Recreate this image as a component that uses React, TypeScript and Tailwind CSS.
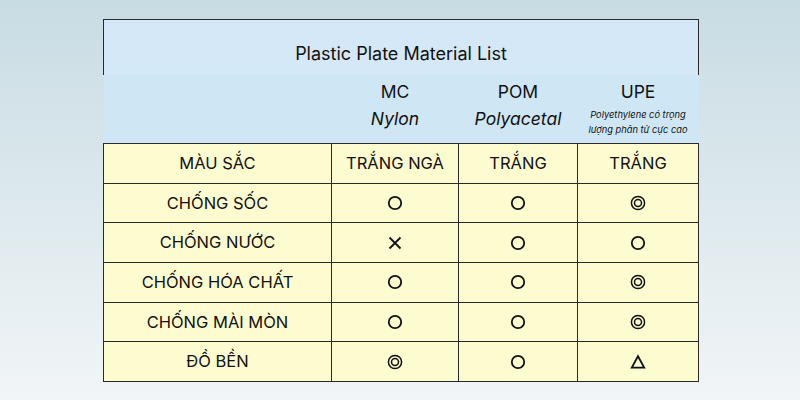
import type { FunctionComponent, JSX } from "react";

type Mark = "o" | "oo" | "x" | "tri";

interface Row {
  label: string;
  values: (Mark | string)[];
}

const rows: Row[] = [
  { label: "MÀU SẮC", values: ["TRẮNG NGÀ", "TRẮNG", "TRẮNG"] },
  { label: "CHỐNG SỐC", values: ["o", "o", "oo"] },
  { label: "CHỐNG NƯỚC", values: ["x", "o", "o"] },
  { label: "CHỐNG HÓA CHẤT", values: ["o", "o", "oo"] },
  { label: "CHỐNG MÀI MÒN", values: ["o", "o", "oo"] },
  { label: "ĐỒ BỀN", values: ["oo", "o", "tri"] },
];

const Symbol: FunctionComponent<{ mark: Mark }> = ({ mark }): JSX.Element => {
  if (mark === "o") {
    return (
      <svg width="16" height="16" viewBox="0 0 16 16" className="mx-auto">
        <circle cx="8" cy="8" r="6.2" fill="none" stroke="#111" strokeWidth="1.8" />
      </svg>
    );
  }
  if (mark === "oo") {
    return (
      <svg width="16" height="16" viewBox="0 0 16 16" className="mx-auto">
        <circle cx="8" cy="8" r="6.6" fill="none" stroke="#111" strokeWidth="1.5" />
        <circle cx="8" cy="8" r="3.5" fill="none" stroke="#111" strokeWidth="1.5" />
      </svg>
    );
  }
  if (mark === "x") {
    return (
      <svg width="16" height="16" viewBox="0 0 16 16" className="mx-auto">
        <path d="M2.5 2.5 L13.5 13.5 M13.5 2.5 L2.5 13.5" stroke="#111" strokeWidth="1.8" />
      </svg>
    );
  }
  return (
    <svg width="16" height="16" viewBox="0 0 16 16" className="mx-auto">
      <path d="M8 2.2 L14.2 13.6 L1.8 13.6 Z" fill="none" stroke="#111" strokeWidth="1.8" strokeLinejoin="miter" />
    </svg>
  );
};

const isMark = (v: string): v is Mark => ["o", "oo", "x", "tri"].includes(v);

const App: FunctionComponent = (): JSX.Element => {
  return (
    <div
      className="w-[800px] h-[400px] bg-gradient-to-b from-[#c8dce3] to-[#f1f5f7] pt-[19px] pl-[103px]"
      style={{ fontFamily: "Inter, 'Noto Sans', sans-serif" }}
    >
      <table className="border-collapse text-[#111] table-fixed w-[595px]">
        <colgroup>
          <col className="w-[228px]" />
          <col className="w-[127px]" />
          <col className="w-[119px]" />
          <col className="w-[121px]" />
        </colgroup>
        <thead>
          <tr className="h-[55px] bg-[#d5e8f7]">
            <th
              colSpan={4}
              className="border-t-[1.5px] border-x-[1.5px] border-[#2a2a2a] font-normal text-[18px] pt-[12px]"
            >
              Plastic Plate Material List
            </th>
          </tr>
          <tr className="h-[69px] bg-[#cfe6f5]">
            <th />
            <th className="font-normal align-top pt-[6px]">
              <div className="text-[17.5px] leading-[22px]">MC</div>
              <div className="text-[17.5px] italic leading-[22px] mt-[5px]">Nylon</div>
            </th>
            <th className="font-normal align-top pt-[6px]">
              <div className="text-[17.5px] leading-[22px]">POM</div>
              <div className="text-[17.5px] italic leading-[22px] mt-[5px]">Polyacetal</div>
            </th>
            <th className="font-normal align-top pt-[6px]">
              <div className="text-[17.5px] leading-[22px]">UPE</div>
              <div className="text-[9.3px] italic leading-[15px] mt-[4px]">
                Polyethylene có trọng
                <br />
                lượng phân tử cực cao
              </div>
            </th>
          </tr>
        </thead>
        <tbody className="bg-[#fdfbd0]">
          {rows.map(({ label, values }, index: number): JSX.Element => {
            return (
              <tr key={index} className="h-[39.7px]">
                <td className="border-[1.5px] border-[#2a2a2a] text-center text-[16.5px]">{label}</td>
                {values.map((v, i: number): JSX.Element => {
                  return (
                    <td key={i} className="border-[1.5px] border-[#2a2a2a] text-center text-[16.5px]">
                      {isMark(v) ? <Symbol mark={v} /> : v}
                    </td>
                  );
                })}
              </tr>
            );
          })}
        </tbody>
      </table>
    </div>
  );
};

export default App;
